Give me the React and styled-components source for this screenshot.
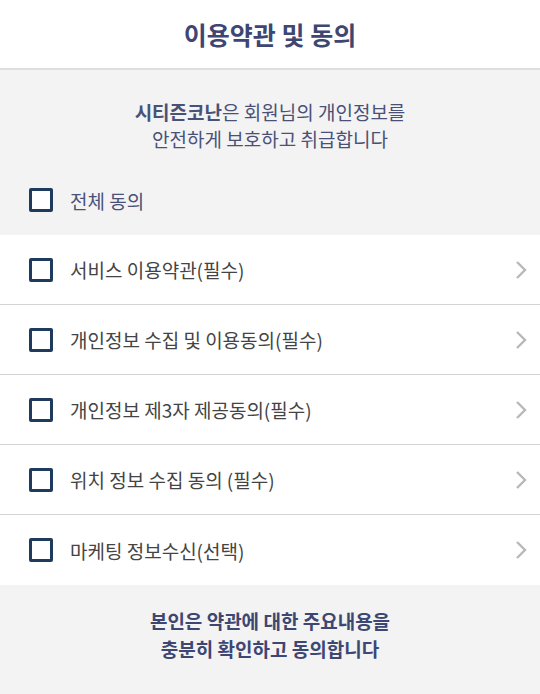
import styled, { createGlobalStyle } from "styled-components";

const terms = [
    "서비스 이용약관(필수)",
    "개인정보 수집 및 이용동의(필수)",
    "개인정보 제3자 제공동의(필수)",
    "위치 정보 수집 동의 (필수)",
    "마케팅 정보수신(선택)",
];

function App() {
    return (
        <>
            <GlobalStyle />
            <Page>
                <Header>이용약관 및 동의</Header>
                <Intro>
                    <Notice>
                        <strong>시티즌코난</strong>은 회원님의 개인정보를
                        <br />
                        안전하게 보호하고 취급합니다
                    </Notice>
                    <AllRow>
                        <CheckBox />
                        <AllLabel>전체 동의</AllLabel>
                    </AllRow>
                </Intro>
                <List>
                    {terms.map((t) => (
                        <Row key={t}>
                            <CheckBox />
                            <Label>{t}</Label>
                            <Chevron viewBox="0 0 12 20">
                                <path d="M2 2 L10 10 L2 18" />
                            </Chevron>
                        </Row>
                    ))}
                </List>
                <Footer>
                    본인은 약관에 대한 주요내용을
                    <br />
                    충분히 확인하고 동의합니다
                </Footer>
            </Page>
        </>
    );
}

export default App;

const GlobalStyle = createGlobalStyle`
    body {
        margin: 0;
        font-family: "Noto Sans CJK KR", "Noto Sans", sans-serif;
        background: #f3f3f4;
    }
`;

const Page = styled.div`
    width: 540px;
    min-height: 694px;
    display: flex;
    flex-direction: column;
    background: #f3f3f4;
`;

const Header = styled.h1`
    margin: 0;
    height: 68px;
    display: flex;
    align-items: center;
    justify-content: center;
    background: #fff;
    border-bottom: 2px solid #dedede;
    font-size: 25px;
    font-weight: 700;
    color: #3e4672;
`;

const Intro = styled.section`
    padding-top: 28px;
`;

const Notice = styled.p`
    margin: 0;
    text-align: center;
    font-size: 19px;
    line-height: 27px;
    color: #4a5177;

    strong {
        font-weight: 700;
    }
`;

const AllRow = styled.div`
    display: flex;
    align-items: center;
    height: 70px;
    margin-top: 13px;
    padding-left: 29px;
`;

const CheckBox = styled.span`
    box-sizing: border-box;
    width: 24px;
    height: 24px;
    flex: none;
    border: 3px solid #1e3a5c;
    border-radius: 2px;
    background: #fff;
`;

const AllLabel = styled.span`
    margin-left: 17px;
    font-size: 19px;
    color: #4a5177;
`;

const List = styled.ul`
    margin: 0;
    padding: 0;
    list-style: none;
    background: #fff;
`;

const Row = styled.li`
    box-sizing: border-box;
    display: flex;
    align-items: center;
    height: 70px;
    padding: 0 13px 0 29px;
    border-bottom: 1px solid #d4d4d4;

    &:last-child {
        border-bottom: none;
    }
`;

const Label = styled.span`
    flex: 1;
    margin-left: 17px;
    font-size: 19px;
    color: #444;
`;

const Chevron = styled.svg`
    width: 12px;
    height: 20px;
    fill: none;
    stroke: #b8b8b8;
    stroke-width: 2.4;
`;

const Footer = styled.p`
    margin: 0;
    padding: 22px 0 30px;
    text-align: center;
    font-size: 19px;
    font-weight: 700;
    line-height: 28px;
    color: #3e4672;
`;
